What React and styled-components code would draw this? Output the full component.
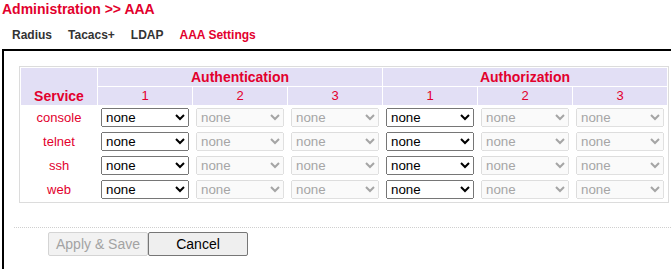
import React from 'react';
import styled, { createGlobalStyle } from 'styled-components';

const GlobalStyle = createGlobalStyle`
  html, body {
    margin: 0;
    padding: 0;
    overflow: hidden;
    background: #fff;
    font-family: "Liberation Sans", Arial, sans-serif;
  }
`;

const RED = '#e2002d';

const Page = styled.div`
  padding: 0 0 0 2px;
`;

const PageTitle = styled.div`
  font-size: 14px;
  font-weight: bold;
  line-height: 18px;
  color: ${RED};
`;

const Tabs = styled.div`
  display: flex;
  margin-top: 9px;
  padding-left: 2px;
`;

const Tab = styled.div`
  font-size: 12px;
  font-weight: bold;
  line-height: 16px;
  padding: 0 8px;
  color: ${props => (props.active ? RED : '#333')};
  cursor: pointer;
`;

const Frame = styled.div`
  margin-top: 6px;
  min-height: 203px;
  border-top: 2px solid #000;
  border-left: 2px solid #000;
  padding: 15px 0 0 10px;
`;

const Table = styled.table`
  margin-left: 5px;
  width: 650px;
  table-layout: fixed;
  border: 1px solid #dcdcdc;
  border-spacing: 1px;
`;

const HeadCell = styled.td`
  background: #e2dff5;
  color: ${RED};
  text-align: center;
  padding: 0;
  height: 18px;
  line-height: 18px;
  font-size: ${props => (props.big ? '14px' : '13px')};
  font-weight: ${props => (props.big ? 'bold' : 'normal')};
  vertical-align: ${props => (props.bottom ? 'bottom' : 'middle')};
`;

const NameCell = styled.td`
  color: ${RED};
  text-align: center;
  font-size: 13px;
  padding: 0;
  height: 23px;
`;

const SelectCell = styled.td`
  text-align: center;
  padding: 0;
  height: 23px;
`;

const Select = styled.select`
  width: 88px;
  height: 19px;
  font-family: "Liberation Sans", Arial, sans-serif;
  font-size: 13.33px;
  margin: 0;
  vertical-align: middle;
`;

const Divider = styled.div`
  margin-top: 24px;
  border-top: 1px dotted #cfcfcf;
`;

const Buttons = styled.div`
  display: flex;
  margin: 4px 0 0 34px;
`;

const Button = styled.button`
  box-sizing: border-box;
  width: 100px;
  height: 24px;
  margin: 0;
  padding: 0;
  white-space: nowrap;
  font-family: "Liberation Sans", Arial, sans-serif;
  font-size: 14px;
  color: #000;
  background: #efefef;
  border: 1px solid #767676;
  border-radius: 2px;

  &:disabled {
    color: #a3a3a3;
    background: #f2f2f2;
    border-color: #d4d4d4;
  }
`;

const services = ['console', 'telnet', 'ssh', 'web'];
const priorities = [1, 2, 3];

function MethodSelect({ enabled }) {
  return (
    <Select disabled={!enabled} defaultValue="none">
      <option value="none">none</option>
      <option value="local">local</option>
      <option value="radius">radius</option>
      <option value="tacacs">tacacs+</option>
      <option value="ldap">ldap</option>
    </Select>
  );
}

export default function App() {
  return (
    <Page>
      <GlobalStyle />
      <PageTitle>Administration &gt;&gt; AAA</PageTitle>
      <Tabs>
        <Tab>Radius</Tab>
        <Tab>Tacacs+</Tab>
        <Tab>LDAP</Tab>
        <Tab active>AAA Settings</Tab>
      </Tabs>
      <Frame>
        <Table>
          <colgroup>
            <col style={{ width: 76 }} />
            {[0, 1, 2, 3, 4, 5].map(i => <col key={i} style={{ width: 94 }} />)}
          </colgroup>
          <thead>
            <tr>
              <HeadCell big bottom rowSpan={2}>Service</HeadCell>
              <HeadCell big colSpan={3}>Authentication</HeadCell>
              <HeadCell big colSpan={3}>Authorization</HeadCell>
            </tr>
            <tr>
              {[...priorities, ...priorities].map((p, i) => <HeadCell key={i}>{p}</HeadCell>)}
            </tr>
          </thead>
          <tbody>
            {services.map(s => (
              <tr key={s}>
                <NameCell>{s}</NameCell>
                {[...priorities, ...priorities].map((p, i) => (
                  <SelectCell key={i}><MethodSelect enabled={p === 1} /></SelectCell>
                ))}
              </tr>
            ))}
          </tbody>
        </Table>
        <Divider />
        <Buttons>
          <Button disabled>Apply &amp; Save</Button>
          <Button>Cancel</Button>
        </Buttons>
      </Frame>
    </Page>
  );
}
